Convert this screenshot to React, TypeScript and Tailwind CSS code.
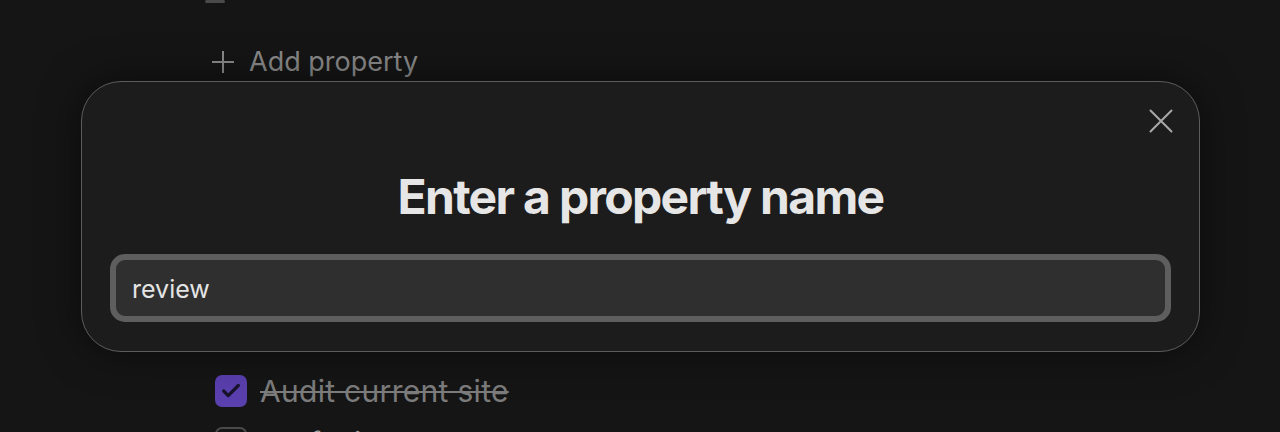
import { Check } from "lucide-react";

const tasks = [
  { title: "Audit current site", done: true },
  { title: "Draft sitemap", done: false },
];

export default function App() {
  return (
    <div
      className="relative h-[432px] w-[1280px] overflow-hidden bg-[#151515]"
      style={{ fontFamily: "Inter, 'Noto Sans', sans-serif" }}
    >
      {/* page body under the dialog */}
      <div className="flex flex-col pl-[205px]">
        <div className="-mt-[24px] flex h-[27px] items-end">
          <span className="h-[3px] w-[20px] rounded-full bg-[#4a4a4a]" />
        </div>

        <button className="mt-[41px] ml-[6px] flex items-center gap-[14px] text-[27px] leading-[36px] text-[#8a8a8a]">
          <svg width="24" height="24" viewBox="0 0 24 24" fill="none" stroke="currentColor" strokeWidth="2">
            <path d="M12 1v22M1 12h22" />
          </svg>
          Add property
        </button>

        <div className="mt-[295px] flex flex-col gap-[20px] pl-[10px]">
          {tasks.map((t) => (
            <div key={t.title} className="flex items-center gap-[13px]">
              {t.done ? (
                <span className="flex h-[32px] w-[32px] items-center justify-center rounded-[7px] bg-[#5a3fae]">
                  <Check size={22} strokeWidth={3.5} className="text-[#17132a]" />
                </span>
              ) : (
                <span className="h-[32px] w-[32px] rounded-[7px] border-2 border-[#4a4a4a]" />
              )}
              <span
                className={
                  t.done
                    ? "text-[30px] leading-[32px] tracking-[0.01em] text-[#7c7c7c] line-through decoration-2"
                    : "text-[30px] leading-[32px] text-[#9a9a9a]"
                }
              >
                {t.title}
              </span>
            </div>
          ))}
        </div>
      </div>

      {/* property name dialog */}
      <div className="absolute left-[81px] top-[81px] flex h-[271px] w-[1119px] flex-col rounded-[40px] border-[1.5px] border-[#5c5c5c] bg-[#1c1c1c] px-[28px] shadow-[0_0_40px_rgba(0,0,0,0.5)]">
        <div className="-mr-[2px] flex justify-end pt-[27px]">
          <svg width="24" height="24" viewBox="0 0 24 24" fill="none" stroke="#a8a8a8" strokeWidth="2" strokeLinecap="round">
            <path d="M1.5 1.5l21 21M22.5 1.5l-21 21" />
          </svg>
        </div>
        <h2 className="mt-[36px] text-center text-[48px] font-bold leading-[56px] tracking-[-0.035em] text-[#e6e6e6]">
          Enter a property name
        </h2>
        <div className="mt-[29px] flex h-[68px] items-center rounded-[15px] border-[6px] border-[#5e5e5e] bg-[#2f2f2f] px-[16px]">
          <span className="pt-[3px] text-[25px] text-[#e4e4e4]">review</span>
        </div>
      </div>
    </div>
  );
}
